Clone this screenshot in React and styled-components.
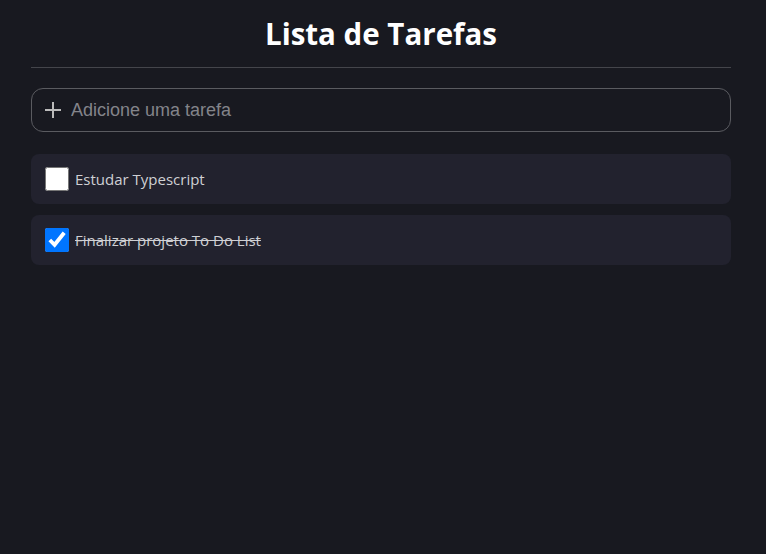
import React, {useState} from 'react';
import styled, {createGlobalStyle} from "styled-components";

const GlobalStyle = createGlobalStyle`
  html, body {
    margin: 0;
    padding: 0;
    background-color: #181920;
    min-height: 100%;
  }
  body {
    font-family: "Open Sans", "Noto Sans", sans-serif;
  }
`

const Page = styled.main`
  width: 700px;
  margin-left: 31px;
  min-height: 554px;
`

const Title = styled.h1`
  margin: 0;
  padding-top: 14px;
  padding-bottom: 13px;
  text-align: center;
  color: #ffffff;
  font-family: "Open Sans", "Noto Sans", sans-serif;
  font-weight: 700;
  font-size: 29.5px;
  line-height: 40px;
  border-bottom: 1px solid #44454b;
`

const InputWrap = styled.label`
  margin-top: 20px;
  height: 44px;
  box-sizing: border-box;
  border: 1px solid #5a5b60;
  border-radius: 12px;
  display: flex;
  align-items: center;
  gap: 9px;
  padding: 0 12px;
  color: #bbbbbb;
`

const TaskInput = styled.input`
  flex: 1;
  background: transparent;
  border: none;
  outline: none;
  color: #dddddd;
  font-family: "Liberation Sans", Arial, sans-serif;
  font-size: 18px;
  padding: 0;

  &::placeholder {
    color: #83848a;
  }
`

const List = styled.ul`
  list-style: none;
  margin: 22px 0 0;
  padding: 0;
  display: flex;
  flex-direction: column;
  gap: 11px;
`

const Row = styled.li`
  height: 50px;
  background-color: #22222e;
  border-radius: 8px;
  display: flex;
  align-items: center;
  gap: 6px;
  padding: 0 14px;
`

const Check = styled.input`
  width: 24px;
  height: 24px;
  margin: 0;
  accent-color: #0075ff;
`

const TaskText = styled.span`
  color: #cfd0d4;
  font-family: "Open Sans", "Noto Sans", sans-serif;
  font-size: 15px;
  text-decoration: ${p => p.$done ? 'line-through' : 'none'};
`

const PlusIcon = () => (
    <svg width="18" height="18" viewBox="0 0 18 18" fill="none" stroke="currentColor" strokeWidth="2">
        <path d="M9 1v16M1 9h16"/>
    </svg>
)

const App = () => {
    const [tasks, setTasks] = useState([
        {id: 1, text: "Estudar Typescript", done: false},
        {id: 2, text: "Finalizar projeto To Do List", done: true},
    ]);

    const toggle = (id) => setTasks(tasks.map(t => t.id === id ? {...t, done: !t.done} : t));

    return (
        <>
            <GlobalStyle/>
            <Page>
                <Title>Lista de Tarefas</Title>
                <InputWrap>
                    <PlusIcon/>
                    <TaskInput placeholder="Adicione uma tarefa"/>
                </InputWrap>
                <List>
                    {tasks.map(task => (
                        <Row key={task.id}>
                            <Check type="checkbox" checked={task.done} onChange={() => toggle(task.id)}/>
                            <TaskText $done={task.done}>{task.text}</TaskText>
                        </Row>
                    ))}
                </List>
            </Page>
        </>
    );
}

export default App;
